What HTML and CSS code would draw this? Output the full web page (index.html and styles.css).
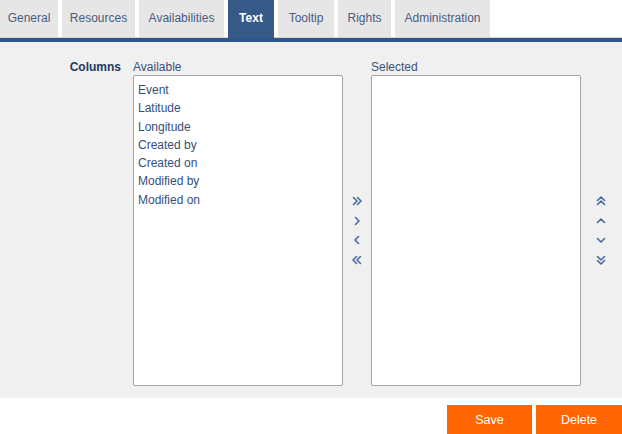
FILE: index.html
```html
<!DOCTYPE html>
<html>
<head>
<meta charset="utf-8">
<link rel="stylesheet" href="styles.css">
</head>
<body>
<div class="tabbar">
  <div class="tab w-general">General</div>
  <div class="tab w-resources">Resources</div>
  <div class="tab w-avail">Availabilities</div>
  <div class="tab w-text active">Text</div>
  <div class="tab w-tooltip">Tooltip</div>
  <div class="tab w-rights">Rights</div>
  <div class="tab w-admin">Administration</div>
</div>
<div class="panel">
  <div class="form-row">
    <div class="label">Columns</div>
    <div class="picker">
      <div class="cap">Available</div>
      <div class="spacer"></div>
      <div class="cap">Selected</div>
      <div class="spacer"></div>
      <div class="box">
        <div class="item">Event</div>
        <div class="item">Latitude</div>
        <div class="item">Longitude</div>
        <div class="item">Created by</div>
        <div class="item">Created on</div>
        <div class="item">Modified by</div>
        <div class="item">Modified on</div>
      </div>
      <div class="arrows">
        <svg class="ic" viewBox="0 0 10 10"><path d="M1.5 1.5L5 5L1.5 8.5M5.5 1.5L9 5L5.5 8.5"/></svg>
        <svg class="ic" viewBox="0 0 10 10"><path d="M3.5 1.5L7 5L3.5 8.5"/></svg>
        <svg class="ic" viewBox="0 0 10 10"><path d="M6.5 1.5L3 5L6.5 8.5"/></svg>
        <svg class="ic" viewBox="0 0 10 10"><path d="M4.5 1.5L1 5L4.5 8.5M8.5 1.5L5 5L8.5 8.5"/></svg>
      </div>
      <div class="box"></div>
      <div class="arrows">
        <svg class="ic" viewBox="0 0 10 10"><path d="M1.5 4.5L5 1L8.5 4.5M1.5 8.5L5 5L8.5 8.5"/></svg>
        <svg class="ic" viewBox="0 0 10 10"><path d="M1.5 6.5L5 3L8.5 6.5"/></svg>
        <svg class="ic" viewBox="0 0 10 10"><path d="M1.5 3.5L5 7L8.5 3.5"/></svg>
        <svg class="ic" viewBox="0 0 10 10"><path d="M1.5 1.5L5 5L8.5 1.5M1.5 5.5L5 9L8.5 5.5"/></svg>
      </div>
    </div>
  </div>
</div>
<div class="actions">
  <button class="btn">Save</button>
  <button class="btn">Delete</button>
</div>
</body>
</html>
```
FILE: styles.css
```css
* { box-sizing: border-box; }
html, body { margin: 0; padding: 0; background: #ffffff; }
body {
  width: 622px;
  font-family: "Liberation Sans", Arial, sans-serif;
  font-size: 12px;
  color: #3b5078;
}
.tabbar {
  display: flex;
  gap: 4px;
  height: 42px;
  border-bottom: 4px solid #2f558f;
  box-shadow: inset 0 -1px 0 #d8d4c8;
}
.tab {
  height: 37px;
  padding: 0 0 2px 0;
  display: flex;
  align-items: center;
  justify-content: center;
  background: #e6e6e6;
  color: #4a5c80;
  font-size: 12px;
  white-space: nowrap;
}
.w-general { width: 58px; }
.w-resources { width: 73px; }
.w-avail { width: 85px; }
.w-text { width: 46px; }
.w-tooltip { width: 56px; }
.w-rights { width: 53px; }
.w-admin { width: 95px; }
.tab.active {
  background: #365a88;
  color: #ffffff;
  font-weight: bold;
  height: 38px;
  padding-bottom: 3px;
}
.panel {
  background: #f0f0f0;
  padding: 18px 0 12px 0;
  height: 356px;
}
.form-row {
  display: flex;
}
.label {
  width: 121px;
  margin-right: 12px;
  text-align: right;
  font-weight: bold;
  color: #1f3a63;
  line-height: 15px;
}
.picker {
  display: grid;
  grid-template-columns: 210px 28px 210px 40px;
  grid-template-rows: 15px 311px;
}
.cap {
  line-height: 15px;
  color: #3b5078;
}
.box {
  background: #ffffff;
  border: 1px solid #a3a3a3;
  border-radius: 2px;
  padding: 5px 4px 3px 4px;
}
.item {
  line-height: 18.3px;
  color: #34507a;
}
.arrows {
  display: flex;
  flex-direction: column;
  justify-content: center;
  align-items: center;
  gap: 9.7px;
}
.ic {
  width: 10px;
  height: 10px;
  fill: none;
  stroke: #4a6a9c;
  stroke-width: 1.6;
  stroke-linecap: round;
  stroke-linejoin: round;
}
.actions {
  display: flex;
  justify-content: flex-end;
  gap: 4px;
  padding-top: 7px;
}
.btn {
  border: 0;
  margin: 0;
  background: #ff6600;
  color: #ffffff;
  font-family: "Liberation Sans", Arial, sans-serif;
  font-size: 12.5px;
  height: 29px;
  width: 85px;
}
.btn + .btn { width: 86px; }
```
